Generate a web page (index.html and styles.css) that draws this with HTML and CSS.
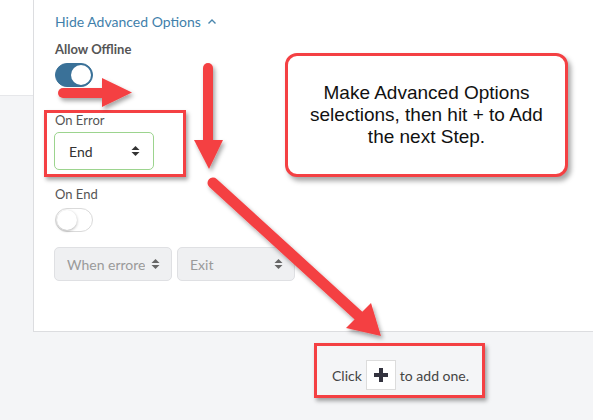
FILE: index.html
```html
<!DOCTYPE html>
<html lang="en">
<head>
    <meta charset="UTF-8">
    <title>Advanced Options</title>
    <link rel="stylesheet" href="styles.css">
</head>
<body>
    <div class="page">
        <div class="rail">
            <div class="rail-top"></div>
        </div>

        <div class="main">
            <div class="card">
                <a class="toggle-link" href="#">Hide Advanced Options
                    <svg class="chevron" width="10" height="7" viewBox="0 0 10 7"><polyline points="1.5,5.5 5,2 8.5,5.5" fill="none" stroke="#4a86ad" stroke-width="1.4"/></svg>
                </a>

                <!-- Allow Offline -->
                <div class="field">
                    <div class="label strong">Allow Offline</div>
                    <div class="switch on"><span class="knob"></span></div>
                </div>

                <!-- On Error -->
                <div class="field">
                    <div class="label">On Error</div>
                    <div class="select active">
                        <span>End</span>
                        <svg class="sort" width="9" height="12" viewBox="0 0 9 12"><path d="M0.5 5 L4.5 1 L8.5 5 Z M0.5 7 L4.5 11 L8.5 7 Z" fill="#333"/></svg>
                    </div>
                </div>

                <!-- On End -->
                <div class="field">
                    <div class="label">On End</div>
                    <div class="switch"><span class="knob"></span></div>
                </div>

                <div class="select-row">
                    <div class="select disabled">
                        <span class="clip">When errored</span>
                        <svg class="sort" width="9" height="12" viewBox="0 0 9 12"><path d="M0.5 5 L4.5 1 L8.5 5 Z M0.5 7 L4.5 11 L8.5 7 Z" fill="#666"/></svg>
                    </div>
                    <div class="select disabled">
                        <span>Exit</span>
                        <svg class="sort" width="9" height="12" viewBox="0 0 9 12"><path d="M0.5 5 L4.5 1 L8.5 5 Z M0.5 7 L4.5 11 L8.5 7 Z" fill="#666"/></svg>
                    </div>
                </div>
            </div>

            <div class="empty-hint">
                <span>Click</span>
                <span class="add-btn">
                    <svg width="14" height="14" viewBox="0 0 14 14"><path d="M5 0 H9 V5 H14 V9 H9 V14 H5 V9 H0 V5 H5 Z" fill="#33333f"/></svg>
                </span>
                <span>to add one.</span>
            </div>
        </div>
    </div>

    <!-- Annotations drawn over the screenshot -->
    <div class="note-box box-error"></div>
    <div class="note-box box-add"></div>

    <div class="callout">
        <p>Make Advanced Options<br>selections, then hit + to Add<br>the next Step.</p>
    </div>

    <svg class="arrows" width="593" height="420" viewBox="0 0 593 420">
        <defs>
            <filter id="shadow" x="-20%" y="-20%" width="140%" height="140%">
                <feDropShadow dx="2" dy="3" stdDeviation="2" flood-color="#000" flood-opacity="0.35"/>
            </filter>
        </defs>
        <g fill="#f44043" stroke="#f44043" filter="url(#shadow)">
            <!-- horizontal arrow -->
            <line x1="63" y1="93" x2="104" y2="93" stroke-width="10" stroke-linecap="round"/>
            <polygon points="102,78 132,92.5 102,107" stroke="none"/>
            <!-- vertical arrow -->
            <line x1="208" y1="68" x2="208" y2="142" stroke-width="10" stroke-linecap="round"/>
            <polygon points="194,140 223,140 209,169" stroke="none"/>
            <!-- diagonal arrow -->
            <line x1="213" y1="183" x2="360" y2="317" stroke-width="11" stroke-linecap="round"/>
            <polygon points="346,328 371,303 381,336" stroke="none"/>
        </g>
    </svg>
</body>
</html>
```

FILE: styles.css
```css
body {
    margin: 0;
    background-color: #f4f5f7;
    font-family: Lato, "Open Sans", sans-serif;
    color: #444;
    position: relative;
    width: 593px;
    height: 420px;
    overflow: hidden;
}
.page {
    display: flex;
    height: 420px;
}
.rail {
    width: 33px;
    flex-shrink: 0;
}
.rail-top {
    height: 95px;
    background-color: #fff;
    border-bottom: 1px solid #e6e7ea;
}
.main {
    flex: 1;
    display: flex;
    flex-direction: column;
}
.card {
    background-color: #fff;
    border-left: 1px solid #dcdde0;
    border-bottom: 1px solid #dcdde0;
    padding: 11px 0 50px 21px;
}
.toggle-link {
    display: inline-flex;
    align-items: center;
    gap: 6px;
    color: #3f7fab;
    font-size: 14px;
    line-height: 20px;
    text-decoration: none;
    margin-bottom: 8px;
}
.chevron {
    margin-top: -2px;
}
.label {
    font-size: 13px;
    line-height: 18px;
    color: #555;
}
.label.strong {
    font-weight: 700;
}
/* Switches */
.switch {
    position: relative;
    width: 38px;
    height: 24px;
    border-radius: 12px;
    box-sizing: border-box;
    background-color: #fff;
    border: 1px solid #dadada;
    margin-top: 5px;
}
.switch .knob {
    position: absolute;
    top: 1px;
    left: 1px;
    width: 20px;
    height: 20px;
    border-radius: 50%;
    background-color: #fff;
    box-shadow: 0 1px 3px rgba(0, 0, 0, 0.3);
}
.switch.on {
    background-color: #3a7198;
    border-color: #3a7198;
}
.switch.on .knob {
    left: 15px;
    box-shadow: none;
}
.field + .field {
    margin-top: 24px;
}
.field:nth-of-type(3) {
    margin-top: 15px;
}
/* Selects */
.select {
    display: flex;
    align-items: center;
    justify-content: space-between;
    box-sizing: border-box;
    border-radius: 5px;
    font-size: 14px;
}
.select.active {
    width: 100px;
    height: 38px;
    margin-top: 3px;
    margin-left: -1px;
    border: 1px solid #9cd48e;
    padding: 0 13px 0 14px;
    color: #333;
}
.select-row {
    display: flex;
    gap: 5px;
    margin-top: 15px;
    margin-left: -1px;
}
.select.disabled {
    width: 118px;
    height: 34px;
    background-color: #eff0f2;
    border: 1px solid #dfe0e3;
    padding: 0 11px 0 12px;
    color: #9a9a9a;
}
.clip {
    width: 78px;
    overflow: hidden;
    white-space: nowrap;
}
/* Empty hint */
.empty-hint {
    display: flex;
    align-items: center;
    gap: 4px;
    padding: 28px 0 0 299px;
    font-size: 14px;
    color: #444;
}
.add-btn {
    display: flex;
    align-items: center;
    justify-content: center;
    width: 30px;
    height: 30px;
    box-sizing: border-box;
    background-color: #fff;
    border: 1px solid #dcdcdc;
}
/* Annotations */
.note-box {
    position: absolute;
    border: 3px solid #f44043;
    box-shadow: 2px 3px 4px rgba(0, 0, 0, 0.35);
}
.box-error {
    left: 44px;
    top: 110px;
    width: 136px;
    height: 61px;
}
.box-add {
    left: 314px;
    top: 343px;
    width: 165px;
    height: 49px;
}
.callout {
    position: absolute;
    left: 285px;
    top: 53px;
    width: 283px;
    height: 124px;
    box-sizing: border-box;
    border: 3px solid #f44043;
    border-radius: 12px;
    background-color: #fff;
    box-shadow: 3px 4px 5px rgba(0, 0, 0, 0.35);
    display: flex;
    align-items: center;
    justify-content: center;
}
.callout p {
    margin: 0;
    font-family: "Liberation Sans", Arial, sans-serif;
    font-size: 19px;
    line-height: 22px;
    color: #111;
    text-align: center;
}
.arrows {
    position: absolute;
    left: 0;
    top: 0;
    pointer-events: none;
}
```
